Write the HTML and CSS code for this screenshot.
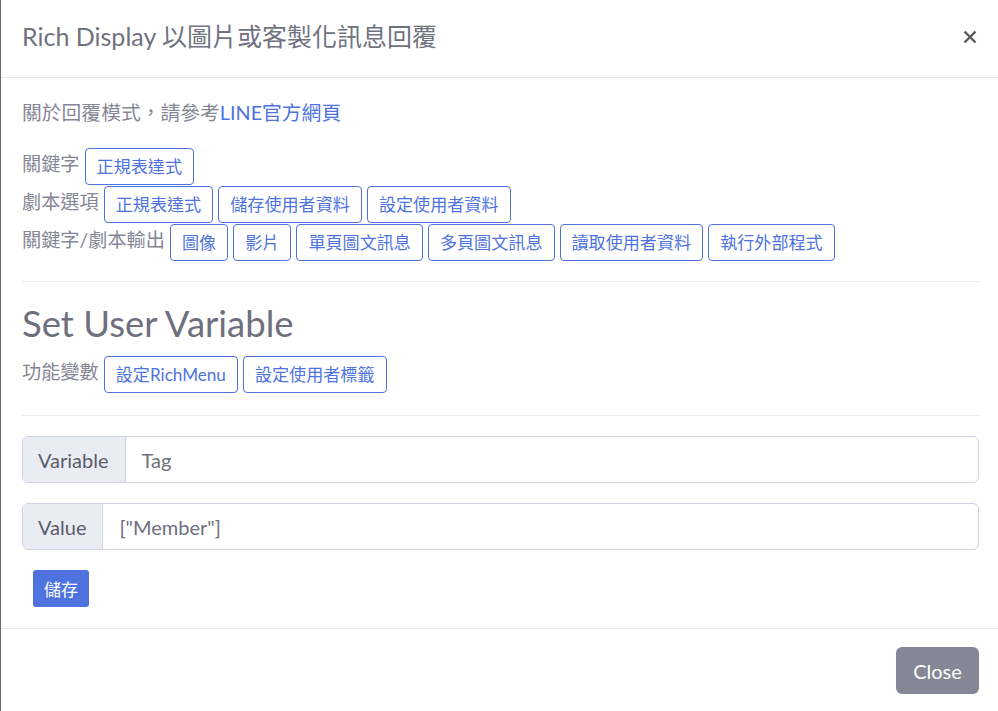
FILE: index.html
```html
<!DOCTYPE html>
<html lang="zh-Hant">
<head>
<meta charset="utf-8">
<link rel="stylesheet" href="styles.css">
</head>
<body>
<div class="modal">
  <header class="modal-header">
    <h5 class="modal-title">Rich Display 以圖片或客製化訊息回覆</h5>
    <button class="close" type="button" aria-label="Close">
      <svg width="16" height="16" viewBox="0 0 16 16"><path d="M2.5 2.5 L13.5 13.5 M13.5 2.5 L2.5 13.5" stroke="#595959" stroke-width="2.4" stroke-linecap="butt"/></svg>
    </button>
  </header>
  <div class="modal-body">
    <p class="intro">關於回覆模式，請參考<a href="#">LINE官方網頁</a></p>
    <div class="rows">
      <div class="row"><span class="label">關鍵字</span><span class="btn">正規表達式</span></div>
      <div class="row"><span class="label">劇本選項</span><span class="btn">正規表達式</span><span class="btn">儲存使用者資料</span><span class="btn">設定使用者資料</span></div>
      <div class="row"><span class="label">關鍵字/劇本輸出</span><span class="btn">圖像</span><span class="btn">影片</span><span class="btn">單頁圖文訊息</span><span class="btn">多頁圖文訊息</span><span class="btn">讀取使用者資料</span><span class="btn">執行外部程式</span></div>
    </div>
    <hr class="sep">
    <h1 class="section-title">Set User Variable</h1>
    <div class="rows">
      <div class="row"><span class="label">功能變數</span><span class="btn">設定RichMenu</span><span class="btn">設定使用者標籤</span></div>
    </div>
    <hr class="sep sep2">
    <div class="input-group">
      <span class="addon">Variable</span>
      <span class="field">Tag</span>
    </div>
    <div class="input-group">
      <span class="addon">Value</span>
      <span class="field">["Member"]</span>
    </div>
    <div class="save-wrap"><button class="btn-save" type="button">儲存</button></div>
  </div>
  <footer class="modal-footer">
    <button class="btn-close" type="button">Close</button>
  </footer>
</div>
</body>
</html>
```
FILE: styles.css
```css
* { box-sizing: border-box; }
html, body { margin: 0; padding: 0; background: #fff; }
body {
  font-family: "Lato", "Noto Sans CJK TC", sans-serif;
  color: #858796;
}
.modal {
  width: 998px;
  height: 711px;
  border-left: 1px solid #6a6a6a;
  display: flex;
  flex-direction: column;
}
.modal-header {
  height: 78px;
  border-bottom: 1px solid #e3e6f0;
  display: flex;
  align-items: center;
  justify-content: space-between;
  padding: 0 20px 0 21px;
}
.modal-title {
  margin: 0;
  font-size: 25px;
  font-weight: 400;
  color: #707280;
  padding-bottom: 8px;
}
.close {
  border: 0;
  background: none;
  padding: 0;
  width: 16px;
  height: 16px;
  display: flex;
  margin-bottom: 4px;
}
.modal-body {
  padding: 20px 19px 0 21px;
}
.intro {
  margin: 0 0 22px;
  font-size: 19.8px;
  line-height: 28px;
  color: #858796;
}
.intro a { color: #4e73df; text-decoration: none; }
.rows { display: flex; flex-direction: column; gap: 1px; }
.row { display: flex; align-items: center; gap: 5px; }
.label { font-size: 19.2px; color: #858796; line-height: 24px; margin-bottom: 6px; }
.btn {
  display: inline-block;
  border: 1px solid #4e73df;
  color: #4e73df;
  border-radius: 4px;
  padding: 0 11px;
  height: 37px;
  line-height: 35px;
  font-size: 17.1px;
}
.sep {
  border: 0;
  border-top: 1px solid #eaecf4;
  margin: 20px 0 19px;
}
.section-title {
  margin: 0 0 11px;
  font-size: 36.5px;
  font-weight: 400;
  line-height: 44px;
  color: #6e707e;
}
.sep2 { margin: 22px 0 20px; }
.input-group {
  display: flex;
  height: 47px;
  border: 1px solid #d1d3e2;
  border-radius: 6px;
  margin-bottom: 20px;
  overflow: hidden;
}
.addon {
  background: #eaecf4;
  border-right: 1px solid #d1d3e2;
  padding: 0 16px 0 15px;
  display: flex;
  align-items: center;
  font-size: 20px;
  color: #5a5c69;
}
.field {
  display: flex;
  align-items: center;
  padding: 0 16px;
  font-size: 20px;
  color: #6e707e;
}
.save-wrap { padding-left: 11px; margin-top: 0; }
.btn-save {
  background: #4e73df;
  border: 0;
  color: #fff;
  border-radius: 3px;
  height: 37px;
  width: 56px;
  font-family: "Noto Sans CJK TC", sans-serif;
  font-size: 17px;
  padding: 0;
}
.modal-footer {
  margin-top: auto;
  border-top: 1px solid #e3e6f0;
  height: 83px;
  display: flex;
  align-items: center;
  justify-content: flex-end;
  padding: 1px 19px 0 0;
}
.btn-close {
  background: #858796;
  border: 0;
  color: #fff;
  border-radius: 6px;
  height: 47px;
  width: 83px;
  font-family: "Lato", sans-serif;
  font-size: 20px;
}
```
